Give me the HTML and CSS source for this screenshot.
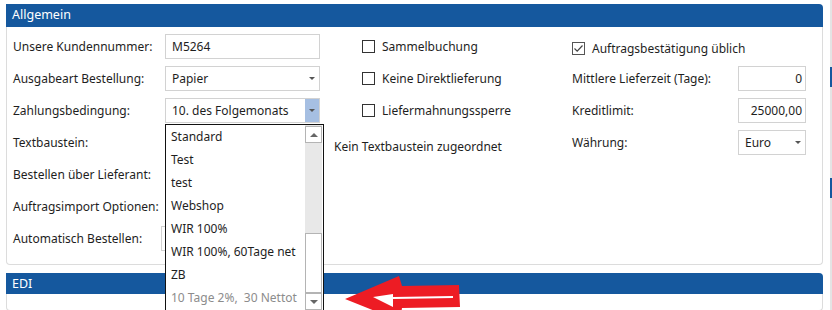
FILE: index.html
```html
<!DOCTYPE html>
<html>
<head>
<meta name="viewport" content="width=device-width, initial-scale=1">
<title>Lieferant - Allgemein</title>
<link rel="stylesheet" href="styles.css">
</head>
<body>
<div class="page">
   <div class="content">
      <!-- Allgemein -->
      <section class="panel">
         <div class="panel-head">Allgemein</div>
         <div class="panel-body panel-body-main">
            <div class="form-grid">
               <!-- row 1 -->
               <div class="label">Unsere Kundennummer:</div>
               <div class="field">M5264</div>
               <div class="check-cell"><span class="checkbox"></span>Sammelbuchung</div>
               <div class="check-cell check-right span-2"><span class="checkbox checked"><svg viewBox="0 0 13 13" width="13" height="13"><path d="M2.5 6.5 L5.2 9.2 L10.5 3.5" fill="none" stroke="#444" stroke-width="1.2"/></svg></span>Auftragsbestätigung üblich</div>

               <!-- row 2 -->
               <div class="label">Ausgabeart Bestellung:</div>
               <div class="field select">Papier<span class="caret"></span></div>
               <div class="check-cell"><span class="checkbox"></span>Keine Direktlieferung</div>
               <div class="label label-right">Mittlere Lieferzeit (Tage):</div>
               <div class="field number">0</div>

               <!-- row 3 -->
               <div class="label">Zahlungsbedingung:</div>
               <div class="field select open">10. des Folgemonats<span class="caret"></span></div>
               <div class="check-cell"><span class="checkbox"></span>Liefermahnungssperre</div>
               <div class="label label-right">Kreditlimit:</div>
               <div class="field number">25000,00</div>

               <!-- row 4 -->
               <div class="label">Textbaustein:</div>
               <div class="field"></div>
               <div class="note">Kein Textbaustein zugeordnet</div>
               <div class="label label-right">Währung:</div>
               <div class="field select">Euro<span class="caret"></span></div>

               <!-- row 5 -->
               <div class="label row-start">Bestellen über Lieferant:</div>
               <div class="field"></div>

               <!-- row 6 -->
               <div class="label row-start">Auftragsimport Optionen:</div>
               <div class="field"></div>

               <!-- row 7 -->
               <div class="label row-start">Automatisch Bestellen:</div>
               <div class="field field-shift"></div>
            </div>

            <!-- opened list of Zahlungsbedingung -->
            <div class="dropdown-list">
               <ul class="options">
                  <li>Standard</li>
                  <li>Test</li>
                  <li>test</li>
                  <li>Webshop</li>
                  <li>WIR 100%</li>
                  <li>WIR 100%, 60Tage net</li>
                  <li>ZB</li>
                  <li class="dim">10 Tage 2%,&nbsp; 30 Nettot</li>
               </ul>
               <div class="scrollbar">
                  <div class="sb-button"><span class="sb-up"></span></div>
                  <div class="sb-track"><div class="sb-thumb"></div></div>
                  <div class="sb-button"><span class="sb-down"></span></div>
               </div>
            </div>
         </div>
      </section>

      <!-- EDI -->
      <section class="panel panel-edi">
         <div class="panel-head">EDI</div>
         <div class="panel-body"></div>
      </section>
   </div>

   <div class="edge">
      <span class="edge-mark"></span>
      <span class="edge-mark"></span>
   </div>

   <!-- red annotation arrow -->
   <svg class="annotation" viewBox="0 0 130 50" width="130" height="50" xmlns="http://www.w3.org/2000/svg">
      <polygon points="5,23 59,0 62,10 119,9 120,31 62,32 60,45" fill="#ed1c24"/>
      <polygon points="33,21 53,18 53,21 113,20 113,22 53,23 53,31" fill="#fff"/>
   </svg>
</div>
</body>
</html>
```

FILE: styles.css
```css
html,
body {
   margin: 0;
   padding: 0;
   height: 100%;
   overflow: hidden;
   background: #fff;
   font-family: "Noto Sans", "Open Sans", sans-serif;
   font-size: 12px;
   color: #1e1e1e;
}

.page {
   position: relative;
   display: flex;
   height: 100%;
}

.content {
   width: 817px;
   padding: 4px 0 0 6px;
}

/* panels */

.panel-head {
   height: 23px;
   line-height: 22px;
   padding-left: 6px;
   background: #15589e;
   color: #fff;
   font-size: 12.5px;
   border-top-right-radius: 4px;
}

.panel-body {
   border: 1px solid #dcdcdc;
   border-top: none;
   border-radius: 0 0 4px 4px;
}

.panel-body-main {
   position: relative;
   height: 237px;
}

.panel-edi {
   margin-top: 8px;
}

.panel-edi .panel-head {
   height: 21px;
   line-height: 21px;
}

.panel-edi .panel-body {
   height: 16px;
}

/* form grid */

.form-grid {
   display: grid;
   grid-template-columns: 152px 155px 251px 167px 68px;
   grid-auto-rows: 25px;
   row-gap: 7px;
   padding: 7px 0 0 6px;
}

.label {
   display: flex;
   align-items: center;
   white-space: nowrap;
}

.row-start {
   grid-column: 1;
}

.label-right {
   padding-left: 1px;
}

.field {
   display: flex;
   align-items: center;
   box-sizing: border-box;
   border: 1px solid #d2d2d2;
   padding: 0 6px;
   background: #fff;
   position: relative;
}

.field-shift {
   margin-left: -4px;
}

.number {
   justify-content: flex-end;
   padding-right: 3px;
}

.select .caret {
   position: absolute;
   right: 0;
   top: 0;
   bottom: 0;
   width: 14px;
   display: flex;
   align-items: center;
   justify-content: center;
}

.select .caret::after {
   content: "";
   border-left: 3px solid transparent;
   border-right: 3px solid transparent;
   border-top: 3px solid #555;
}

.select.open .caret {
   background: #a6bfe2;
}

.check-cell {
   display: flex;
   align-items: center;
   padding-left: 42px;
   white-space: nowrap;
}

.check-right {
   padding-left: 0;
   margin-top: 3px;
   margin-left: 1px;
}

.span-2 {
   grid-column: span 2;
}

.checkbox {
   width: 11px;
   height: 11px;
   border: 1px solid #333;
   margin-right: 7px;
   background: #fff;
   display: inline-block;
   position: relative;
}

.checkbox.checked {
   border-color: #555;
}

.checkbox svg {
   position: absolute;
   left: -1px;
   top: -1px;
}

.note {
   display: flex;
   align-items: center;
   padding: 7px 0 0 14px;
   white-space: nowrap;
}

/* open dropdown */

.dropdown-list {
   position: absolute;
   left: 158px;
   top: 97px;
   width: 157px;
   height: 185px;
   border: 1px solid #111;
   background: #fff;
   display: flex;
}

.options {
   list-style: none;
   margin: 0;
   padding: 0;
   flex: 1;
}

.options li {
   height: 23px;
   line-height: 23px;
   padding-left: 5px;
   white-space: nowrap;
   overflow: hidden;
}

.options li.dim {
   color: #8c8c8c;
}

.scrollbar {
   width: 17px;
   display: flex;
   flex-direction: column;
   background: #e8e8e8;
   margin-right: 1px;
}

.sb-button {
   height: 17px;
   box-sizing: border-box;
   border: 1px solid #b4b4b4;
   background: #fff;
   display: flex;
   align-items: center;
   justify-content: center;
}

.sb-button:first-child {
   margin-top: 1px;
}

.sb-up {
   border-left: 4px solid transparent;
   border-right: 4px solid transparent;
   border-bottom: 4px solid #666;
}

.sb-down {
   border-left: 4px solid transparent;
   border-right: 4px solid transparent;
   border-top: 4px solid #666;
}

.sb-track {
   flex: 1;
   display: flex;
   flex-direction: column;
   justify-content: flex-end;
}

.sb-thumb {
   height: 60px;
   box-sizing: border-box;
   border: 1px solid #b4b4b4;
   background: #fff;
}

/* right page edge */

.edge {
   position: absolute;
   left: 830px;
   top: 0;
   width: 2px;
   height: 100%;
   background: #e4e4e4;
   display: flex;
   flex-direction: column;
   padding-top: 67px;
   gap: 91px;
   box-sizing: border-box;
}

.edge-mark {
   height: 20px;
   background: #15589e;
}

.annotation {
   position: absolute;
   left: 340px;
   top: 276px;
}
```
